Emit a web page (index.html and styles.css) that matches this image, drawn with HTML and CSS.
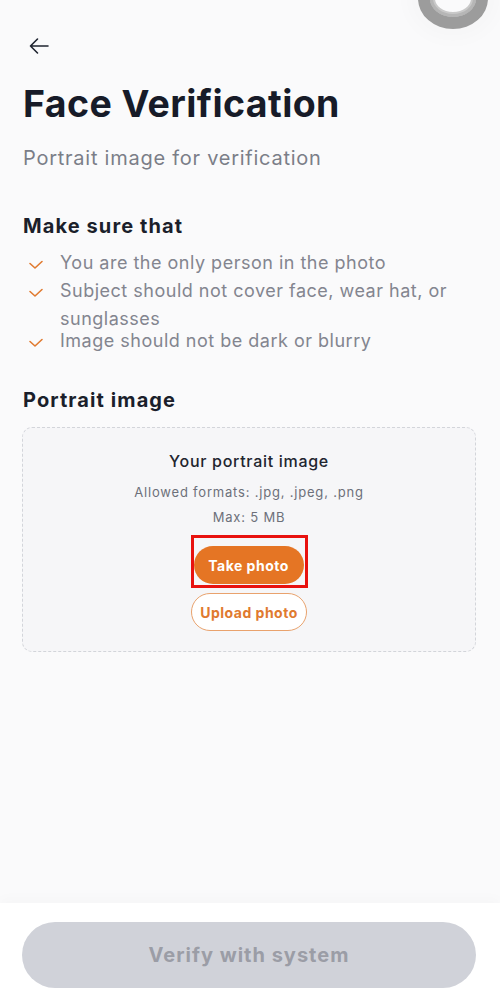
FILE: index.html
```html
<!DOCTYPE html>
<html>
<head>
<meta charset="utf-8">
<link rel="stylesheet" href="styles.css">
</head>
<body>
<div class="screen">
  <div class="ring"></div>
  <main class="content">
    <button class="back" aria-label="Back">
      <svg width="24" height="24" viewBox="0 0 24 24" fill="none" stroke="#1f2430" stroke-width="1.6" stroke-linecap="round" stroke-linejoin="round"><path d="M21 12H3.5M10.5 5L3.5 12L10.5 19"/></svg>
    </button>
    <h1 class="title">Face Verification</h1>
    <p class="subtitle">Portrait image for verification</p>

    <h2 class="section">Make sure that</h2>
    <ul class="checks">
      <li><span class="check"><svg width="16" height="16" viewBox="0 0 16 16" fill="none" stroke="#e07a2f" stroke-width="1.6" stroke-linecap="round" stroke-linejoin="round"><path d="M2 6.5L7 11L14 4.5"/></svg></span><span>You are the only person in the photo</span></li>
      <li><span class="check"><svg width="16" height="16" viewBox="0 0 16 16" fill="none" stroke="#e07a2f" stroke-width="1.6" stroke-linecap="round" stroke-linejoin="round"><path d="M2 6.5L7 11L14 4.5"/></svg></span><span>Subject should not cover face, wear hat, or sunglasses</span></li>
      <li><span class="check"><svg width="16" height="16" viewBox="0 0 16 16" fill="none" stroke="#e07a2f" stroke-width="1.6" stroke-linecap="round" stroke-linejoin="round"><path d="M2 6.5L7 11L14 4.5"/></svg></span><span>Image should not be dark or blurry</span></li>
    </ul>

    <h2 class="section section-2">Portrait image</h2>
    <div class="dropzone">
      <div class="dz-title">Your portrait image</div>
      <div class="dz-meta">Allowed formats: .jpg, .jpeg, .png</div>
      <div class="dz-meta">Max: 5 MB</div>
      <div class="highlight">
        <button class="btn-take">Take photo</button>
      </div>
      <button class="btn-upload">Upload photo</button>
    </div>
  </main>
  <footer class="footer">
    <button class="btn-verify">Verify with system</button>
  </footer>
</div>
</body>
</html>
```

FILE: styles.css
```css
* { box-sizing: border-box; }
html, body { margin: 0; padding: 0; }
body {
  font-family: Inter, "Noto Sans", "Liberation Sans", sans-serif;
  background: #fafafb;
  color: #1b1f2b;
}
.screen {
  position: relative;
  width: 500px;
  height: 1000px;
  display: flex;
  flex-direction: column;
  overflow: hidden;
}
.ring {
  position: absolute;
  left: 418px;
  top: -32px;
  width: 70px;
  height: 61px;
  border-radius: 50%;
  border: 12px solid #9c9c9c;
  box-shadow: 0 0 0 3px #b6b6b6 inset, 0 0 0 5px #c9c9c9 inset, 0 0 20px 10px rgba(0,0,0,0.02);
}
.content {
  flex: 1;
  padding: 34px 23px 0;
}
.back {
  display: block;
  background: none;
  border: 0;
  padding: 0;
  margin: 0 0 0 4px;
  width: 24px;
  height: 24px;
  cursor: pointer;
}
.title {
  margin: 21px 0 0;
  font-size: 37.5px;
  font-weight: 700;
  letter-spacing: 0.4px;
  line-height: 50px;
  color: #171b28;
}
.subtitle {
  margin: 16px 0 0;
  font-size: 20px;
  letter-spacing: 0.75px;
  line-height: 26px;
  color: #7b7e88;
}
.section {
  margin: 42px 0 0;
  font-size: 20px;
  font-weight: 700;
  letter-spacing: 1.1px;
  line-height: 26px;
  color: #1b1f2b;
}
.section-2 { margin-top: 32px; }
.checks {
  list-style: none;
  margin: 10px 0 0;
  padding: 0;
}
.checks li {
  display: flex;
  align-items: flex-start;
  font-size: 18px;
  letter-spacing: 0.5px;
  line-height: 28px;
  color: #83858f;
}
.checks li:nth-child(3) { margin-top: -6px; }
.check {
  flex: none;
  width: 37px;
  padding-left: 5px;
  padding-top: 8px;
  display: flex;
}
.dropzone {
  margin: 14px 1px 0 -1px;
  background: #f6f6f8;
  border: 1.5px dashed #d3d5da;
  border-radius: 10px;
  padding: 21px 0 20px;
  display: flex;
  flex-direction: column;
  align-items: center;
}
.dz-title {
  font-size: 16px;
  font-weight: 500;
  letter-spacing: 0.7px;
  line-height: 24px;
  color: #22252f;
}
.dz-meta {
  font-size: 13px;
  letter-spacing: 0.8px;
  line-height: 25px;
  color: #6d707a;
}
.dz-title + .dz-meta { margin-top: 7px; }
.highlight {
  margin-top: 5px;
  border: 3px solid #e8120f;
  padding: 8px 1px 1px 0;
  display: flex;
}
.btn-take {
  font-family: inherit;
  font-size: 14px;
  font-weight: 700;
  letter-spacing: 0.5px;
  color: #ffffff;
  background: #e57524;
  border: 0;
  border-radius: 19px;
  width: 110px;
  height: 38px;
  padding: 0;
}
.btn-upload {
  margin-top: 5px;
  font-family: inherit;
  font-size: 14px;
  font-weight: 700;
  letter-spacing: 0.5px;
  color: #e07a2f;
  background: #ffffff;
  border: 1.5px solid #e9a26d;
  border-radius: 19px;
  width: 116px;
  height: 38px;
  padding: 0;
}
.footer {
  background: #ffffff;
  height: 97px;
  padding: 19px 24px 0 22px;
  box-shadow: 0 -6px 10px rgba(0,0,0,0.015);
}
.btn-verify {
  width: 100%;
  height: 66px;
  border: 0;
  border-radius: 33px;
  background: #d0d2d9;
  font-family: inherit;
  font-size: 20px;
  font-weight: 700;
  letter-spacing: 1px;
  color: #9b9da6;
}
```
